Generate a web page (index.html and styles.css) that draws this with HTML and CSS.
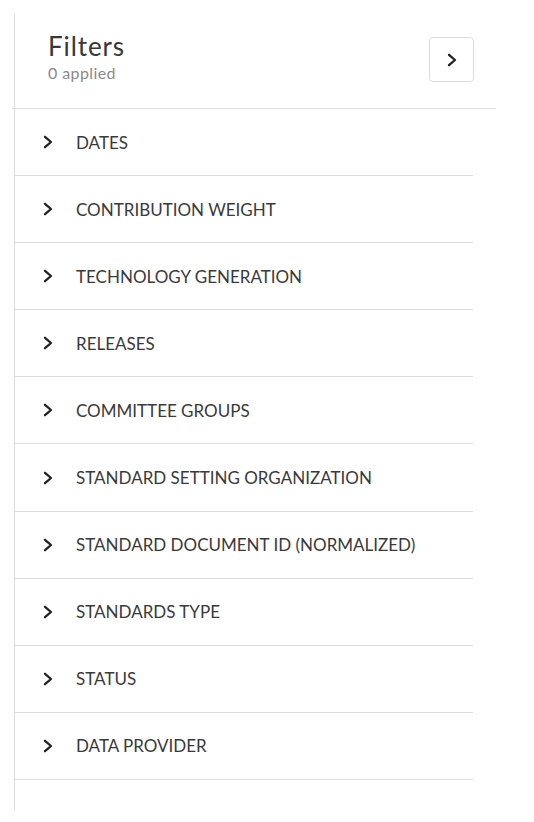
FILE: index.html
```html
<!DOCTYPE html>
<html>
<head>
<meta charset="utf-8">
<link rel="stylesheet" href="styles.css">
</head>
<body>
<aside class="panel">
  <header class="panel-head">
    <div class="titles">
      <h1 class="title">Filters</h1>
      <div class="sub">0 applied</div>
    </div>
    <button class="collapse" aria-label="Collapse">
      <svg width="12" height="14" viewBox="0 0 12 14"><path d="M3 1.8 L9 7 L3 12.2" fill="none" stroke="#222" stroke-width="2.3" stroke-linecap="round" stroke-linejoin="round"/></svg>
    </button>
  </header>
  <ul class="list">
    <li class="row"><svg class="chev" width="12" height="14" viewBox="0 0 12 14"><path d="M3 1.8 L9 7 L3 12.2" fill="none" stroke="#222" stroke-width="2.3" stroke-linecap="round" stroke-linejoin="round"/></svg><span>DATES</span></li>
    <li class="row"><svg class="chev" width="12" height="14" viewBox="0 0 12 14"><path d="M3 1.8 L9 7 L3 12.2" fill="none" stroke="#222" stroke-width="2.3" stroke-linecap="round" stroke-linejoin="round"/></svg><span>CONTRIBUTION WEIGHT</span></li>
    <li class="row"><svg class="chev" width="12" height="14" viewBox="0 0 12 14"><path d="M3 1.8 L9 7 L3 12.2" fill="none" stroke="#222" stroke-width="2.3" stroke-linecap="round" stroke-linejoin="round"/></svg><span>TECHNOLOGY GENERATION</span></li>
    <li class="row"><svg class="chev" width="12" height="14" viewBox="0 0 12 14"><path d="M3 1.8 L9 7 L3 12.2" fill="none" stroke="#222" stroke-width="2.3" stroke-linecap="round" stroke-linejoin="round"/></svg><span>RELEASES</span></li>
    <li class="row"><svg class="chev" width="12" height="14" viewBox="0 0 12 14"><path d="M3 1.8 L9 7 L3 12.2" fill="none" stroke="#222" stroke-width="2.3" stroke-linecap="round" stroke-linejoin="round"/></svg><span>COMMITTEE GROUPS</span></li>
    <li class="row"><svg class="chev" width="12" height="14" viewBox="0 0 12 14"><path d="M3 1.8 L9 7 L3 12.2" fill="none" stroke="#222" stroke-width="2.3" stroke-linecap="round" stroke-linejoin="round"/></svg><span>STANDARD SETTING ORGANIZATION</span></li>
    <li class="row"><svg class="chev" width="12" height="14" viewBox="0 0 12 14"><path d="M3 1.8 L9 7 L3 12.2" fill="none" stroke="#222" stroke-width="2.3" stroke-linecap="round" stroke-linejoin="round"/></svg><span>STANDARD DOCUMENT ID (NORMALIZED)</span></li>
    <li class="row"><svg class="chev" width="12" height="14" viewBox="0 0 12 14"><path d="M3 1.8 L9 7 L3 12.2" fill="none" stroke="#222" stroke-width="2.3" stroke-linecap="round" stroke-linejoin="round"/></svg><span>STANDARDS TYPE</span></li>
    <li class="row"><svg class="chev" width="12" height="14" viewBox="0 0 12 14"><path d="M3 1.8 L9 7 L3 12.2" fill="none" stroke="#222" stroke-width="2.3" stroke-linecap="round" stroke-linejoin="round"/></svg><span>STATUS</span></li>
    <li class="row"><svg class="chev" width="12" height="14" viewBox="0 0 12 14"><path d="M3 1.8 L9 7 L3 12.2" fill="none" stroke="#222" stroke-width="2.3" stroke-linecap="round" stroke-linejoin="round"/></svg><span>DATA PROVIDER</span></li>
  </ul>
</aside>
</body>
</html>
```
FILE: styles.css
```css
html, body {
  margin: 0;
  padding: 0;
  background: #fff;
}
body {
  font-family: Lato, "Open Sans", sans-serif;
  color: #333;
}
.panel {
  margin: 14px 0 0 14px;
  width: 482px;
  height: 796px;
  border-left: 1px solid #ddd;
  box-sizing: border-box;
}
.panel-head {
  position: relative;
  display: flex;
  justify-content: space-between;
  align-items: flex-start;
  height: 95px;
  box-sizing: border-box;
  padding: 17px 22px 0 33px;
  border-bottom: 1px solid #ddd;
}
.panel-head::after {
  content: "";
  position: absolute;
  left: -3px;
  bottom: -1px;
  width: 3px;
  height: 1px;
  background: #ddd;
}
.title {
  margin: 0;
  font-size: 26px;
  font-weight: 400;
  line-height: 30px;
  letter-spacing: 0.9px;
  color: #383838;
}
.sub {
  font-size: 16px;
  color: #8a8a8a;
  line-height: 18px;
  margin-top: 3px;
  letter-spacing: 0.4px;
}
.collapse {
  margin-top: 6px;
  width: 45px;
  height: 45px;
  border: 1px solid #dcdcdc;
  border-radius: 4px;
  background: #fff;
  padding: 0;
  display: flex;
  align-items: center;
  justify-content: center;
}
.list {
  list-style: none;
  margin: 0;
  padding: 0;
  width: 458px;
}
.row {
  display: flex;
  align-items: center;
  height: 66.1px;
  border-bottom: 1px solid #ddd;
  padding-left: 27px;
  gap: 22px;
  font-size: 17px;
  color: #3a3a3a;
}
.chev {
  flex: none;
}
```
